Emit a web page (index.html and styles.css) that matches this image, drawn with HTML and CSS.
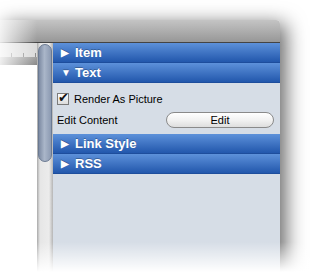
FILE: index.html
```html
<!DOCTYPE html>
<html lang="en">
<head>
    <meta charset="UTF-8">
    <title>Inspector</title>
    <link rel="stylesheet" href="styles.css">
</head>
<body>
    <div class="stage">
        <div class="window">
            <div class="toolbar"></div>
            <div class="main">
                <div class="ruler-col">
                    <div class="ruler"></div>
                    <div class="ruler-band"></div>
                </div>
                <div class="scroll">
                    <div class="thumb"></div>
                </div>
                <div class="panel">
                    <div class="header"><span class="tri">&#9654;</span>Item</div>
                    <div class="header"><span class="tri">&#9660;</span>Text</div>
                    <div class="content">
                        <label class="row">
                            <span class="check">&#10004;</span>
                            Render As Picture
                        </label>
                        <div class="row between">
                            <span>Edit Content</span>
                            <button class="btn">Edit</button>
                        </div>
                    </div>
                    <div class="header"><span class="tri">&#9654;</span>Link Style</div>
                    <div class="header"><span class="tri">&#9654;</span>RSS</div>
                </div>
            </div>
        </div>
        <div class="left-fade"></div>
        <div class="fade"></div>
    </div>
</body>
</html>
```

FILE: styles.css
```css
body {
    margin: 0;
    background: #fff;
    font-family: "Liberation Sans", Arial, sans-serif;
    overflow: hidden;
}
.stage {
    position: relative;
    width: 316px;
    height: 272px;
    padding-top: 20px;
    box-sizing: border-box;
}
.window {
    width: 280px;
    height: 260px;
    border-radius: 0 4px 0 0;
    box-shadow: 6px 4px 20px rgba(0, 0, 0, 0.6);
    background: #fff;
    display: flex;
    flex-direction: column;
}
.toolbar {
    flex: none;
    height: 22px;
    border-radius: 0 4px 0 0;
    border-bottom: 1px solid #444;
    background: linear-gradient(#c4c4c4, #979797);
}
.main {
    flex: 1;
    display: flex;
}
.ruler-col {
    width: 37px;
    background: #fff;
}
.ruler {
    height: 4px;
    border-top: 10px solid #dadada;
    background: repeating-linear-gradient(to right, #dadada 0, #dadada 11px, #8a8a8a 11px, #8a8a8a 12px);
}
.ruler-band {
    height: 8px;
    background: linear-gradient(#a0a0a0, #888);
}
.scroll {
    width: 16px;
    background: linear-gradient(to right, #a9a9a9, #e6e6e6 3px, #ececec 12px, #b5b5b5);
    padding: 1px 1px 0 1px;
    box-sizing: border-box;
}
.thumb {
    height: 116px;
    border-radius: 7px;
    border: 1px solid #6b7a92;
    background: linear-gradient(to right, #7d8ba3, #aab6c9 45%, #8c9ab2);
}
.panel {
    flex: 1;
    background: #d6dde6;
    color: #000;
}
.header {
    height: 19px;
    border-bottom: 1px solid #1d4d9c;
    background: linear-gradient(#5d91da, #2257ac);
    color: #fff;
    font-weight: bold;
    font-size: 13px;
    line-height: 19px;
    display: flex;
    align-items: center;
    text-shadow: 0 -1px 0 rgba(0, 0, 0, 0.25);
}
.tri {
    font-size: 10px;
    width: 22px;
    padding-left: 8px;
    box-sizing: border-box;
}
.content {
    height: 51px;
    padding: 9px 6px 0 4px;
    box-sizing: border-box;
    font-size: 11px;
    display: flex;
    flex-direction: column;
    gap: 6px;
}
.row {
    display: flex;
    align-items: center;
    height: 14px;
}
.between {
    justify-content: space-between;
    height: 16px;
}
.check {
    width: 10px;
    height: 10px;
    border: 1px solid #7b7b7b;
    background: linear-gradient(#fdfdfd, #dcdcdc);
    font-size: 13px;
    line-height: 7px;
    color: #111;
    margin-right: 5px;
    display: flex;
    justify-content: center;
}
.btn {
    width: 108px;
    height: 16px;
    border: 1px solid #8a8a8a;
    border-radius: 8px;
    background: linear-gradient(#ffffff, #f2f2f2 50%, #dedede);
    font-family: "Liberation Sans", Arial, sans-serif;
    font-size: 11px;
    padding: 0;
    color: #000;
}
.left-fade {
    position: absolute;
    left: 0;
    top: 20px;
    width: 37px;
    height: 48px;
    background: linear-gradient(to right, rgba(255, 255, 255, 0.85), rgba(255, 255, 255, 0));
}
.fade {
    position: absolute;
    left: 0;
    right: 0;
    bottom: 0;
    height: 30px;
    background: linear-gradient(rgba(255, 255, 255, 0), #fff);
}
```
